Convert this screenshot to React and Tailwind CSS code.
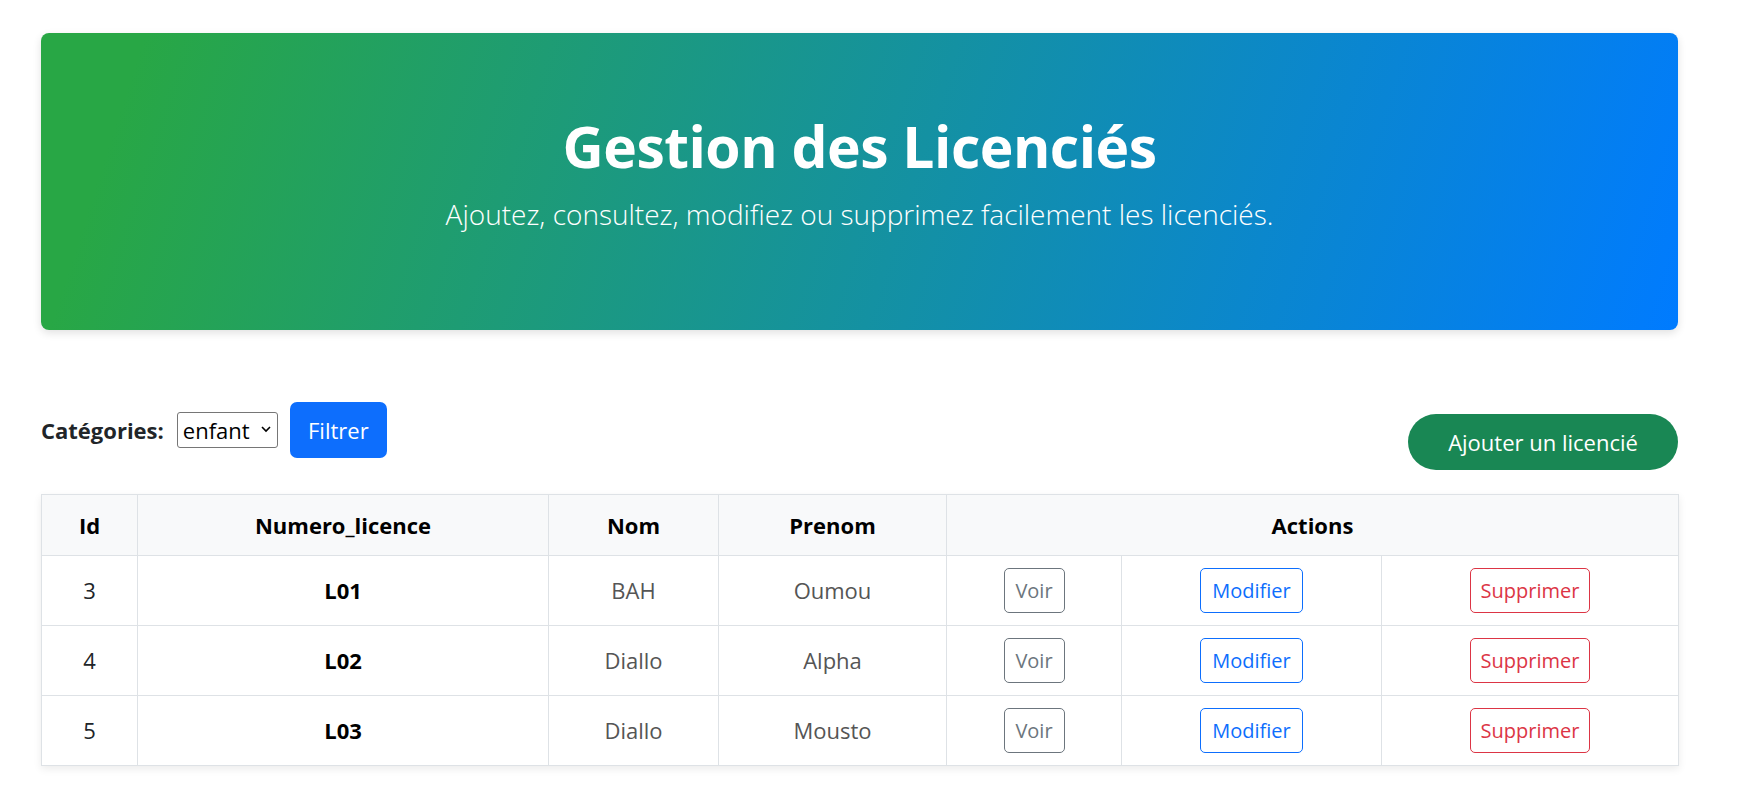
import React from "react";

const rows = [
  { id: 3, num: "L01", nom: "BAH", prenom: "Oumou" },
  { id: 4, num: "L02", nom: "Diallo", prenom: "Alpha" },
  { id: 5, num: "L03", nom: "Diallo", prenom: "Mousto" },
];

export default function App() {
  return (
    <div
      className="min-h-[786px] bg-white text-[#212529]"
      style={{ fontFamily: '"Open Sans", "Noto Sans", sans-serif' }}
    >
      <div className="pl-[41px] pt-[33px]">
        <div className="w-[1637px]">
          <div className="h-[297px] rounded-[8px] bg-[linear-gradient(108deg,#28a745_6%,#007bff_100%)] shadow-[0_3px_8px_rgba(0,0,0,0.12)] flex flex-col items-center pt-[79px] text-white">
            <h1 className="text-[57px] leading-[68px] font-bold tracking-[-0.5px]">Gestion des Licenciés</h1>
            <p className="mt-[15px] text-[28px] leading-[38px] font-light">
              Ajoutez, consultez, modifiez ou supprimez facilement les licenciés.
            </p>
          </div>

          <div className="mt-[72px] flex items-start justify-between">
            <div className="flex items-center h-[56px]">
              <span className="text-[22px] font-bold mr-[13px] text-[#212529]">Catégories:</span>
              <div className="relative h-[36px] w-[101px] border border-[#767676] rounded-[3px] flex items-center pl-[5px] text-[22px] text-black">
                enfant
                <svg className="absolute right-[6px] top-[13px]" width="10" height="7" viewBox="0 0 10 7">
                  <path d="M1 1l4 4 4-4" fill="none" stroke="#000" strokeWidth="1.6" />
                </svg>
              </div>
              <button className="ml-[12px] h-[56px] w-[97px] rounded-[7px] bg-[#0d6efd] text-white text-[22px]">
                Filtrer
              </button>
            </div>
            <button className="mt-[12px] h-[56px] w-[270px] rounded-full bg-[#198754] text-white text-[22px]">
              Ajouter un licencié
            </button>
          </div>

          <table className="mt-[24px] w-[1637px] table-fixed border-collapse shadow-[0_3px_8px_rgba(0,0,0,0.08)] text-[22px]">
            <colgroup>
              <col className="w-[96px]" />
              <col className="w-[411px]" />
              <col className="w-[170px]" />
              <col className="w-[228px]" />
              <col className="w-[175px]" />
              <col className="w-[260px]" />
              <col className="w-[297px]" />
            </colgroup>
            <thead>
              <tr className="h-[61px] bg-[#f8f9fa]">
                <th className="border border-[#dee2e6] font-bold text-black">Id</th>
                <th className="border border-[#dee2e6] font-bold text-black">Numero_licence</th>
                <th className="border border-[#dee2e6] font-bold text-black">Nom</th>
                <th className="border border-[#dee2e6] font-bold text-black">Prenom</th>
                <th colSpan={3} className="border border-[#dee2e6] font-bold text-black">Actions</th>
              </tr>
            </thead>
            <tbody>
              {rows.map((r) => (
                <tr key={r.id} className="h-[70px]">
                  <td className="border border-[#dee2e6] text-center text-[#212529]">{r.id}</td>
                  <td className="border border-[#dee2e6] text-center font-bold text-black">{r.num}</td>
                  <td className="border border-[#dee2e6] text-center text-[#555]">{r.nom}</td>
                  <td className="border border-[#dee2e6] text-center text-[#555]">{r.prenom}</td>
                  <td className="border border-[#dee2e6] text-center">
                    <button className="h-[45px] w-[61px] rounded-[5px] border border-[#6c757d] text-[#6c757d] text-[20px] align-middle">Voir</button>
                  </td>
                  <td className="border border-[#dee2e6] text-center">
                    <button className="h-[45px] w-[103px] rounded-[5px] border border-[#0d6efd] text-[#0d6efd] text-[20px] align-middle">Modifier</button>
                  </td>
                  <td className="border border-[#dee2e6] text-center">
                    <button className="h-[45px] w-[120px] rounded-[5px] border border-[#dc3545] text-[#dc3545] text-[20px] align-middle">Supprimer</button>
                  </td>
                </tr>
              ))}
            </tbody>
          </table>
        </div>
      </div>
    </div>
  );
}
